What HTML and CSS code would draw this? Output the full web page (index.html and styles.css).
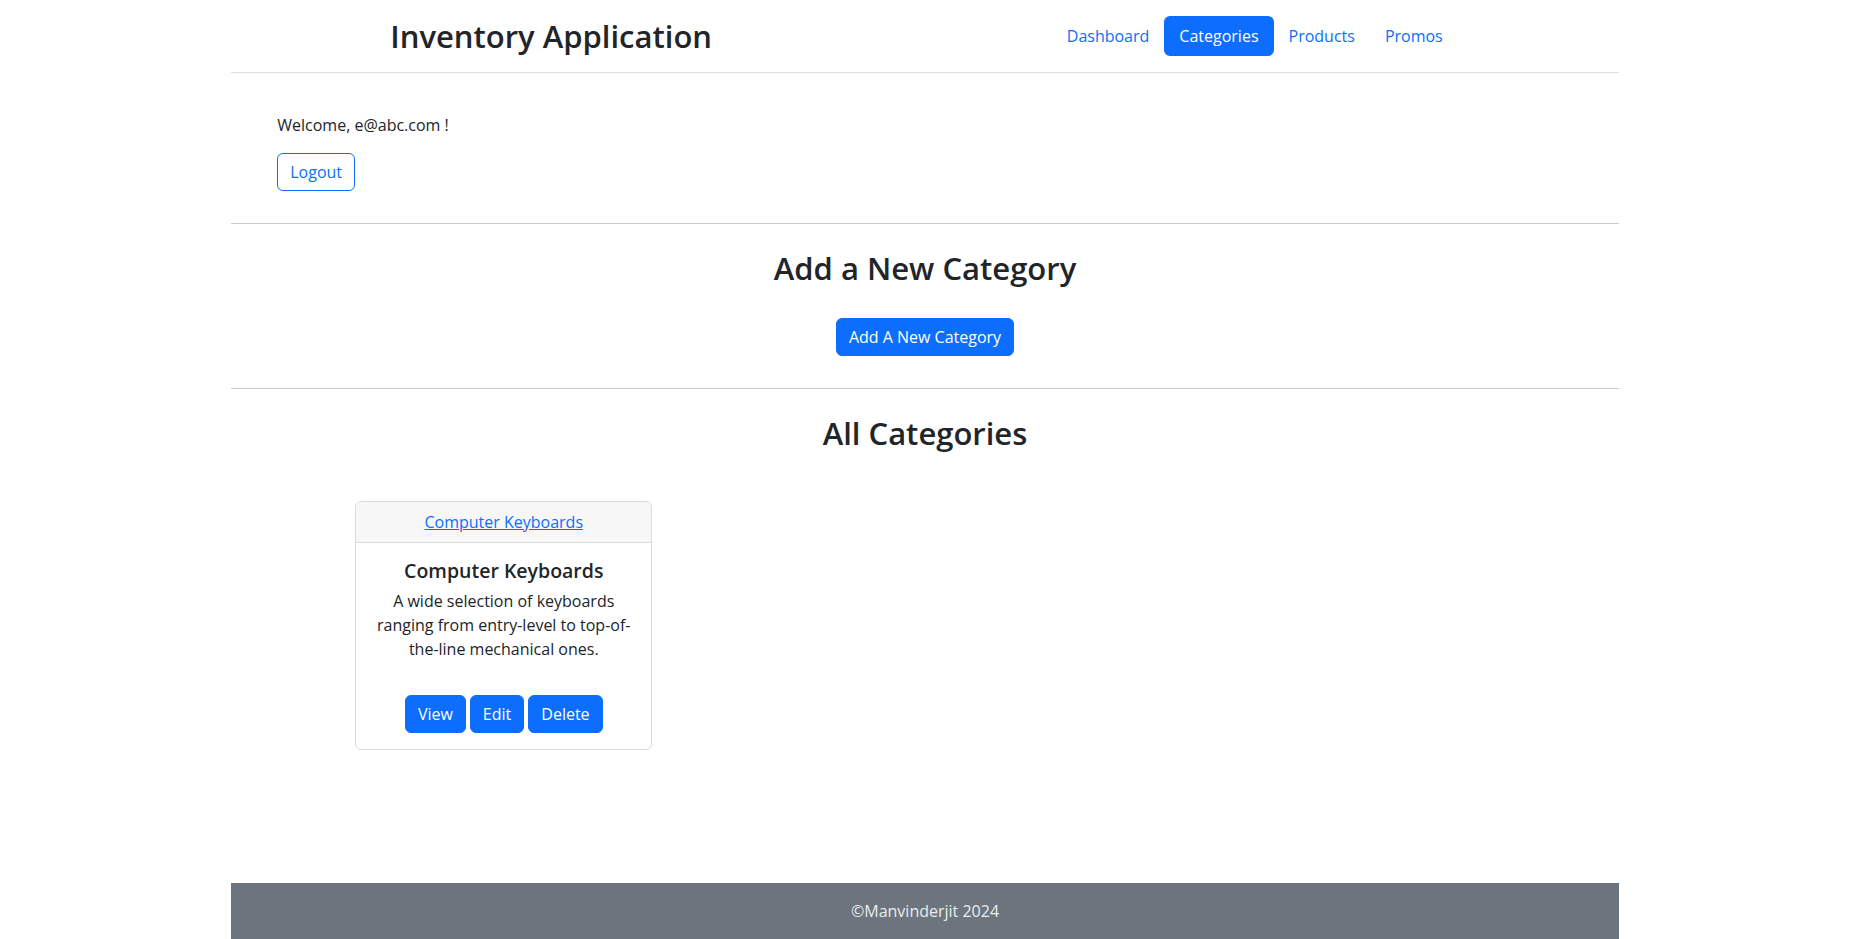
FILE: index.html
```html
<!DOCTYPE html>
<html lang="en">
<head>
<meta charset="utf-8">
<title>Inventory Application</title>
<link rel="stylesheet" href="styles.css">
</head>
<body>
<div class="page">
  <header class="site-header">
    <h1 class="brand">Inventory Application</h1>
    <nav class="nav">
      <a class="nav-link" href="#">Dashboard</a>
      <a class="nav-link active" href="#">Categories</a>
      <a class="nav-link" href="#">Products</a>
      <a class="nav-link" href="#">Promos</a>
    </nav>
  </header>

  <section class="welcome">
    <p class="welcome-text">Welcome, e@abc.com !</p>
    <button class="btn btn-outline">Logout</button>
  </section>

  <hr class="divider">

  <section class="add-section">
    <h2 class="section-title">Add a New Category</h2>
    <button class="btn btn-primary">Add A New Category</button>
  </section>

  <hr class="divider">

  <section class="all-section">
    <h2 class="section-title">All Categories</h2>
    <div class="cards">
      <div class="card">
        <div class="card-header"><a href="#">Computer Keyboards</a></div>
        <div class="card-body">
          <h5 class="card-title">Computer Keyboards</h5>
          <p class="card-text">A wide selection of keyboards ranging from entry-level to top-of-the-line mechanical ones.</p>
          <div class="card-actions">
            <button class="btn btn-primary">View</button>
            <button class="btn btn-primary">Edit</button>
            <button class="btn btn-primary">Delete</button>
          </div>
        </div>
      </div>
    </div>
  </section>

  <footer class="site-footer">©Manvinderjit 2024</footer>
</div>
</body>
</html>
```
FILE: styles.css
```css
* { box-sizing: border-box; }

html, body { margin: 0; padding: 0; }

body {
  font-family: "Open Sans", sans-serif;
  font-size: 16px;
  line-height: 1.5;
  color: #212529;
  background: #fff;
}

.page {
  width: 75%;
  margin: 0 auto;
  min-height: 100vh;
  display: flex;
  flex-direction: column;
}

.site-header {
  display: flex;
  align-items: center;
  justify-content: space-between;
  padding: 16px 159px 16px 159px;
  border-bottom: 1px solid #dee2e6;
}

.brand {
  margin: 0;
  font-size: 31px;
  font-weight: 600;
  line-height: 38px;
  color: #212529;
}

.nav {
  display: flex;
  margin-right: 2px;
}

.nav-link {
  display: block;
  padding: 8px 15px;
  color: #0d6efd;
  text-decoration: none;
  border-radius: 6px;
  line-height: 24px;
}

.nav-link.active {
  background: #0d6efd;
  color: #fff;
}

.welcome {
  padding: 40px 46px 16px;
}

.welcome-text {
  margin: 0 0 16px;
}

.btn {
  display: inline-block;
  font-family: inherit;
  font-size: 16px;
  line-height: 24px;
  padding: 6px 12px;
  border: 1px solid transparent;
  border-radius: 6px;
  cursor: pointer;
}

.btn-outline {
  color: #0d6efd;
  border-color: #0d6efd;
  background: #fff;
}

.btn-primary {
  color: #fff;
  background: #0d6efd;
  border-color: #0d6efd;
}

.divider {
  margin: 16px 0;
  border: 0;
  border-top: 1px solid #c8c9ca;
  height: 0;
}

.section-title {
  font-size: 31px;
  font-weight: 600;
  line-height: 38px;
  margin: 0;
}

.add-section {
  text-align: center;
  padding: 9px 0 16px;
}

.add-section .section-title {
  margin: 0 0 31px;
}

.all-section {
  text-align: center;
  padding-top: 9px;
}

.cards {
  display: flex;
  flex-wrap: wrap;
  gap: 24px;
  margin-top: 49px;
  padding-left: 124px;
}

.card {
  width: 297px;
  border: 1px solid #d9dadb;
  border-radius: 6px;
  overflow: hidden;
  text-align: center;
}

.card-header {
  background: #f7f7f7;
  border-bottom: 1px solid #d9dadb;
  padding: 8px 16px;
}

.card-header a {
  color: #0d6efd;
  text-decoration: underline;
}

.card-body {
  padding: 16px;
}

.card-title {
  margin: 0 0 6px;
  font-size: 19.5px;
  font-weight: 600;
  line-height: 24px;
}

.card-text {
  margin: 0 0 34px;
}

.card-actions {
  display: flex;
  justify-content: center;
  gap: 4px;
}

.site-footer {
  margin-top: auto;
  background: #6c757d;
  color: #e9ecef;
  text-align: center;
  padding: 16px;
  line-height: 24px;
}
```
